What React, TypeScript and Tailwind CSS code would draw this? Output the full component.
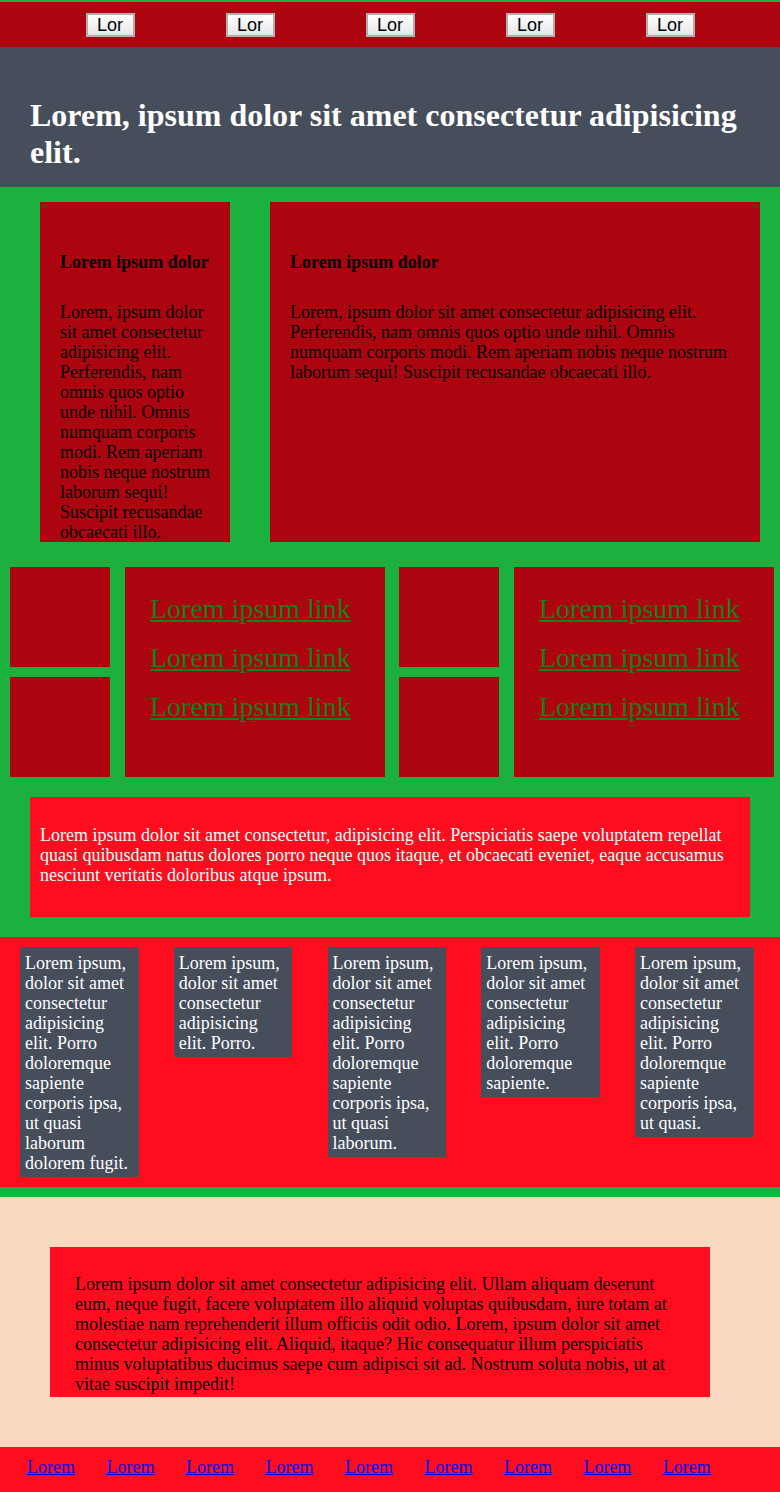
const serif = "font-['Liberation_Serif','Times_New_Roman',serif]"

const cardText =
  'Lorem, ipsum dolor sit amet consectetur adipisicing elit. Perferendis, nam omnis quos optio unde nihil. Omnis numquam corporis modi. Rem aperiam nobis neque nostrum laborum sequi! Suscipit recusandae obcaecati illo.'

const smallCards = [
  'Lorem ipsum, dolor sit amet consectetur adipisicing elit. Porro doloremque sapiente corporis ipsa, ut quasi laborum dolorem fugit.',
  'Lorem ipsum, dolor sit amet consectetur adipisicing elit. Porro.',
  'Lorem ipsum, dolor sit amet consectetur adipisicing elit. Porro doloremque sapiente corporis ipsa, ut quasi laborum.',
  'Lorem ipsum, dolor sit amet consectetur adipisicing elit. Porro doloremque sapiente.',
  'Lorem ipsum, dolor sit amet consectetur adipisicing elit. Porro doloremque sapiente corporis ipsa, ut quasi.',
]

function LinkBox() {
  return (
    <div className="w-[260px] h-[210px] bg-[#ad0510] pl-[25px] pt-[26px] flex flex-col gap-[17px]">
      {[0, 1, 2].map((i) => (
        <a key={i} href="#" className="text-[28px] leading-[32px] text-[#12801c] underline">
          Lorem ipsum link
        </a>
      ))}
    </div>
  )
}

function SquareStack() {
  return (
    <div className="w-[100px] flex flex-col gap-[10px]">
      <div className="h-[100px] bg-[#ad0510]" />
      <div className="h-[100px] bg-[#ad0510]" />
    </div>
  )
}

export default function App() {
  return (
    <div className={`min-h-screen bg-[#1cb03f] pt-[2px] text-[18px] leading-[20px] ${serif}`}>
      {/* Nav */}
      <nav className="h-[45px] bg-[#ad0510] px-10 flex items-center justify-around">
        {[0, 1, 2, 3, 4].map((i) => (
          <button
            key={i}
            className="w-[49px] h-[24px] border-2 border-[#b0b0b0] bg-gradient-to-b from-white to-[#e6e6e6] text-black text-[18px] leading-[20px] font-['Liberation_Sans',Arial,sans-serif] flex items-center justify-center"
          >
            Lor
          </button>
        ))}
      </nav>

      {/* Header */}
      <header className="bg-[#464e5c] px-[30px] pt-[50px] pb-[16px]">
        <h1 className="text-white text-[32px] leading-[37px] font-bold">
          Lorem, ipsum dolor sit amet consectetur adipisicing elit.
        </h1>
      </header>

      {/* Cards */}
      <section className="pt-[15px] pb-[20px]">
        <div className="flex pl-[40px] gap-[40px]">
          <div className="w-[190px] h-[340px] overflow-hidden bg-[#ad0510] px-5 pt-[50px] text-black">
            <h4 className="font-bold">Lorem ipsum dolor</h4>
            <p className="mt-[30px]">{cardText}</p>
          </div>
          <div className="w-[490px] h-[340px] overflow-hidden bg-[#ad0510] px-5 pt-[50px] text-black">
            <h4 className="font-bold">Lorem ipsum dolor</h4>
            <p className="mt-[30px]">{cardText}</p>
          </div>
        </div>

        <div className="flex mt-[25px] pl-[10px]">
          <SquareStack />
          <div className="ml-[15px]">
            <LinkBox />
          </div>
          <div className="ml-[14px]">
            <SquareStack />
          </div>
          <div className="ml-[15px]">
            <LinkBox />
          </div>
        </div>

        <div className="mx-[30px] mt-[20px] h-[120px] bg-[#ff0d1e] px-[10px] pt-[28px] text-white">
          <p>
            Lorem ipsum dolor sit amet consectetur, adipisicing elit. Perspiciatis saepe voluptatem repellat quasi
            quibusdam natus dolores porro neque quos itaque, et obcaecati eveniet, eaque accusamus nesciunt veritatis
            doloribus atque ipsum.
          </p>
        </div>
      </section>

      {/* Dark cards */}
      <section className="bg-[#ff0d1e] py-[10px] pl-[20px] flex items-start gap-[35.25px]">
        {smallCards.map((t, i) => (
          <div key={i} className="w-[118.5px] bg-[#464e5c] text-white px-[5px] pt-[6px] pb-[4px]">
            {t}
          </div>
        ))}
      </section>

      <div className="h-[10px]" />

      {/* Peach */}
      <section className="bg-[#f8d9bf] py-[50px]">
        <div className="ml-[50px] w-[660px] h-[150px] bg-[#ff0d1e] px-[25px] pt-[27px] text-black">
          <p>
            Lorem ipsum dolor sit amet consectetur adipisicing elit. Ullam aliquam deserunt eum, neque fugit, facere
            voluptatem illo aliquid voluptas quibusdam, iure totam at molestiae nam reprehenderit illum officiis odit
            odio. Lorem, ipsum dolor sit amet consectetur adipisicing elit. Aliquid, itaque? Hic consequatur illum
            perspiciatis minus voluptatibus ducimus saepe cum adipisci sit ad. Nostrum soluta nobis, ut at vitae
            suscipit impedit!
          </p>
        </div>
      </section>

      {/* Footer */}
      <footer className="bg-[#ff0d1e] pl-[27px] pt-[10px] pb-[15px] flex gap-[31.5px]">
        {Array.from({ length: 9 }).map((_, i) => (
          <a key={i} href="#" className="text-[#0000ee] underline">
            Lorem
          </a>
        ))}
      </footer>
    </div>
  )
}
